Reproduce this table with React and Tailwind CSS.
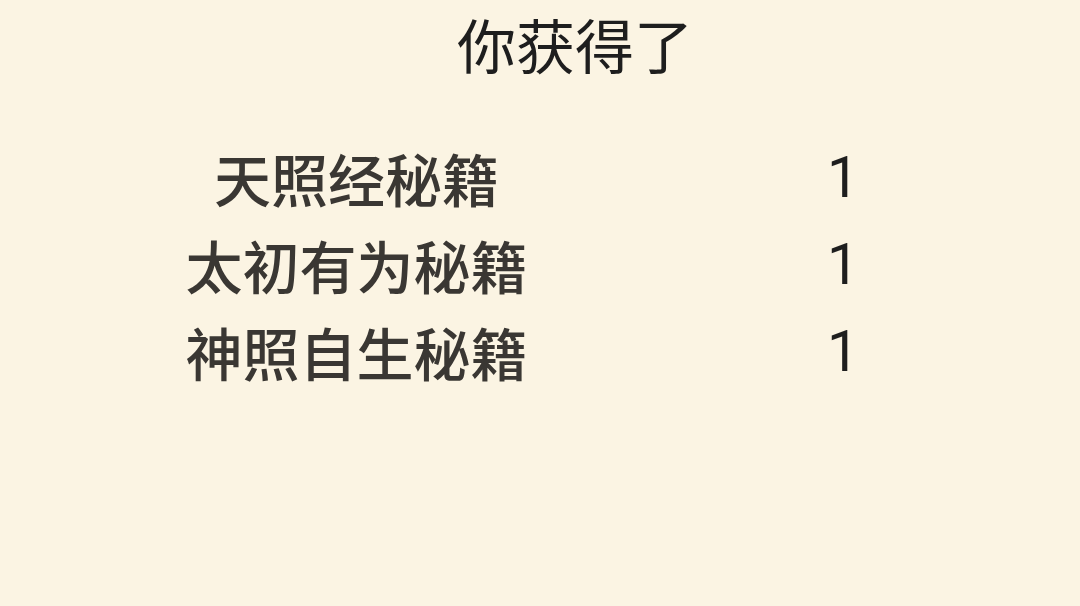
const ITEMS = [
  { name: '天照经秘籍', count: 1 },
  { name: '太初有为秘籍', count: 1 },
  { name: '神照自生秘籍', count: 1 },
];

export default function App() {
  return (
    <div
      className="w-[1080px] h-[606px] bg-[#fbf4e3] overflow-hidden"
      style={{ fontFamily: '"Noto Sans CJK SC", "Noto Sans", sans-serif' }}
    >
      <div className="flex justify-center pl-[70px]">
        <h1 className="text-[59px] leading-[88px] font-normal text-[#1e1e1e]">你获得了</h1>
      </div>

      <div className="mt-[46px] pl-[185px] grid grid-cols-[343px_100px] gap-x-[265px] text-[57px] leading-[87px] text-[#3a3733] font-medium">
        {ITEMS.map((item) => (
          <div key={item.name} className="contents">
            <div className="text-center">{item.name}</div>
            <div className="text-center text-[#1e1e1e] font-normal" style={{ fontFamily: 'Roboto, sans-serif' }}>{item.count}</div>
          </div>
        ))}
      </div>
    </div>
  );
}
